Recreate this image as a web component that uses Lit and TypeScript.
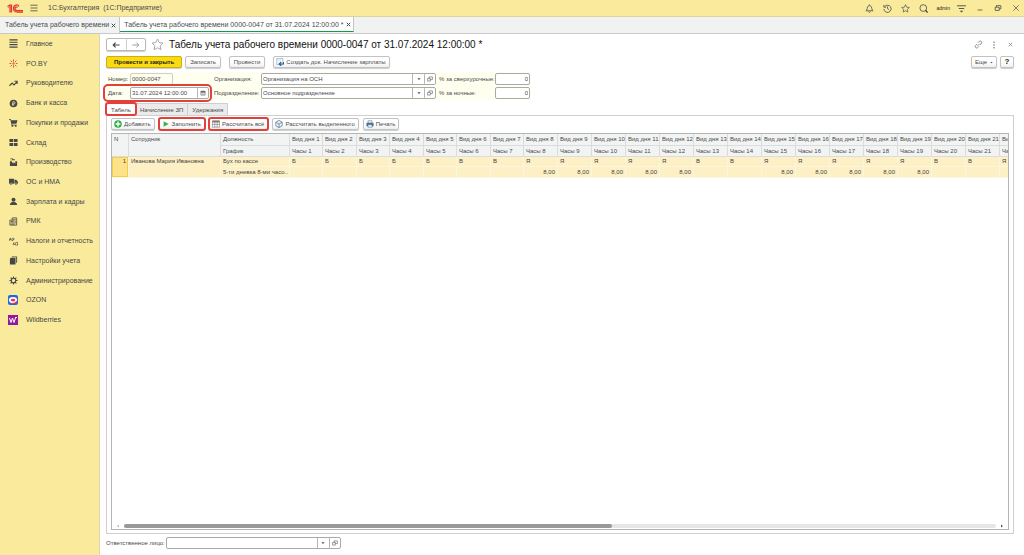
import { LitElement, html, css, svg, nothing } from "lit";
import { customElement, state } from "lit/decorators.js";
import { classMap } from "lit/directives/class-map.js";
import { styleMap } from "lit/directives/style-map.js";

const stroke = (body: unknown, w = 1.5) => html`<svg class="ico" viewBox="0 0 20 20" fill="none" stroke="currentColor" stroke-width=${w} aria-hidden="true">${body}</svg>`;
const solid = (body: unknown) => html`<svg class="ico" viewBox="0 0 20 20" fill="currentColor" aria-hidden="true">${body}</svg>`;

const icons = {
  bell: stroke(svg`<path d="M10 1v2M2 15h16c-2.500-2-2.500-3-3-6C14.500 5.500 12.500 3.500 10 3.500S5.500 5.500 5 9c-.5 3-.5 4-3 6zM8 17c.5 2 3.500 2 4 0"/>`, 1.8),
  history: stroke(svg`<path d="M3.500 6A8 8 0 1 1 2 11M2 2v5h5M10 5.500V10l3.500 2.500"/>`, 1.8),
  star: stroke(svg`<path d="M10 1.500l2.600 5.600 6 .7-4.500 4.100 1.200 6L10 15l-5.300 2.900 1.200-6L1.400 7.800l6-.7z"/>`),
  search: stroke(svg`<circle cx="9.500" cy="9" r="7.500"/><path d="M14.500 14l4.500 5" stroke-width="3"/>`, 1.8),
  settings: stroke(svg`<path d="M0 4h20M4 10h12"/><path d="M6 15h8l-4 4z" fill="currentColor" stroke="none"/>`, 2),
  min: stroke(svg`<path d="M4 15h12"/>`, 2),
  restore: stroke(svg`<path d="M3 8h10v8H3zM6 8V4h11v8h-4"/>`, 2),
  close: stroke(svg`<path d="M3 3l14 14M17 3L3 17"/>`, 1.7),
  shut: stroke(svg`<path d="M3 3l14 14M17 3L3 17"/>`, 4),
  burger: stroke(svg`<path d="M1 3h18M1 10h18M1 17h18"/>`, 2),
  link: stroke(svg`<path d="M8 13l5-5M9 6l3-3.200c3-2.300 7 1.700 4.700 4.700L13.500 11M11 14l-3 3.200c-3 2.300-7-1.700-4.700-4.700L6.500 9"/>`, 1.8),
  dots: solid(svg`<circle cx="10" cy="3" r="2"/><circle cx="10" cy="10" r="2"/><circle cx="10" cy="17" r="2"/>`),
  back: stroke(svg`<path d="M19 10H3M9 4l-6 6 6 6"/>`, 3),
  forward: stroke(svg`<path d="M1 10h16M11 4l6 6-6 6"/>`, 2),
  down: solid(svg`<path d="M2 6h16l-8 9z"/>`),
  open: stroke(svg`<path d="M2 8h9v9H2zM7 8V3h11v9h-7"/>`, 1.8),
  calendar: stroke(svg`<path d="M3 4h14v13H3z"/><path d="M3 6h14" stroke-width="4"/><path d="M6 11h8M6 14h8" stroke-width="1"/>`, 1.8),
  create: html`<svg class="ico" viewBox="0 0 20 20" fill="none" aria-hidden="true"><path d="M2 1h15v15H2z" fill="#fff" stroke="#7b93ab" stroke-width="1.500"/><path d="M4 4h9M4 7h9" stroke="#b8c8d8"/><path d="M19 10v5H9M13 10l-5 5 5 5" stroke="#1d65ad" stroke-width="3"/></svg>`,
  add: html`<svg class="ico" viewBox="0 0 20 20" aria-hidden="true"><circle cx="10" cy="10" r="9.500" fill="#2fae49"/><path d="M10 4v12M4 10h12" stroke="#fff" stroke-width="3.500"/></svg>`,
  play: html`<svg class="ico" viewBox="0 0 20 20" aria-hidden="true"><path d="M4 3l13 7-13 7z" fill="#33b54a"/></svg>`,
  grid: html`<svg class="ico" viewBox="0 0 20 20" aria-hidden="true"><path d="M1 2h18v16H1z" fill="#fff" stroke="#777" stroke-width="1.500"/><path d="M1 4h18" stroke="#777" stroke-width="4"/><path d="M7 2v16M13 2v16M1 11h18" stroke="#777" stroke-width="1.500"/></svg>`,
  cube: html`<svg class="ico" viewBox="0 0 20 20" fill="#eef4f9" stroke="#4f6f8e" stroke-width="1.800" aria-hidden="true"><path d="M10 1l8 4.500v9L10 19l-8-4.500v-9z"/><path d="M2 5.500l8 4.500 8-4.500M10 10v9"/></svg>`,
  print: html`<svg class="ico" viewBox="0 0 20 20" aria-hidden="true"><path d="M5 2h10v6H5z" fill="#fff" stroke="#56779a" stroke-width="1.500"/><rect x="1" y="7" width="18" height="9" rx="2" fill="#4f7397"/><path d="M5 12h10v6H5z" fill="#fff" stroke="#56779a" stroke-width="1.500"/></svg>`,
};

const sections = [
  { name: "Главное", icon: stroke(svg`<path d="M1 2h18M1 7.300h18M1 12.600h18M1 18h18"/>`, 2.500) },
  { name: "PO.BY", icon: html`<svg class="ico" viewBox="0 0 20 20" stroke="#e0452f" stroke-width="2" fill="none" aria-hidden="true"><path d="M10 1v5M10 14v5M1 10h4M15 10h4M3.500 3.500l3.500 3.500M13 13l3.500 3.500M16.500 3.500L13 7M7 13l-3.500 3.500"/><circle cx="10" cy="10" r="1.500"/></svg>` },
  { name: "Руководителю", icon: stroke(svg`<path d="M1 15l6-6 4 4 7-7M12 5h6v6"/>`, 2.500) },
  { name: "Банк и касса", icon: solid(svg`<circle cx="10" cy="10" r="8.500"/><path d="M8.500 15V6h2.500a2.300 2.300 0 0 1 0 4.800H6.500M6.500 13h5" fill="none" stroke="#f9eb9b" stroke-width="1.600"/>`) },
  { name: "Покупки и продажи", icon: solid(svg`<path d="M0 2h4l1 3h14l-2.500 8H6.500L8 15h9v1.500H6L3 4H0z"/><circle cx="7.500" cy="17.500" r="2"/><circle cx="15" cy="17.500" r="2"/>`) },
  { name: "Склад", icon: solid(svg`<path d="M1 2h8.200v7H1zM10.800 2H19v7h-8.200zM1 11h8.200v7H1zM10.800 11H19v7h-8.200z"/>`) },
  { name: "Производство", icon: solid(svg`<path d="M2 18V9l1-1V6h3v3l4 3V9l4 3V7h4v11zM3 1h6v2h4v2H7V3H3z"/>`) },
  { name: "ОС и НМА", icon: solid(svg`<path d="M0 4h11v11H0zM12 6h4l4 5v4h-8z"/><circle cx="4.500" cy="15.500" r="2.500" stroke="#f9eb9b"/><circle cx="15.500" cy="15.500" r="2.500" stroke="#f9eb9b"/>`) },
  { name: "Зарплата и кадры", icon: solid(svg`<circle cx="10" cy="6" r="4.500"/><path d="M2 18c0-5 2.500-6 6-7h4c3.500 1 6 2 6 7z"/>`) },
  { name: "РМК", icon: stroke(svg`<path d="M2 7h9v11H2zM7 7V2h10v16h-6M10 5h5M4 10h5M4 13h5M4 16h5M13 9h3M13 13h3"/>`, 1.8) },
  { name: "Налоги и отчетность", icon: stroke(svg`<path d="M1 8l2-6 3 6M1 6h4M7 3h4v3H8v3M11 12l-2 6M10 15l4 3M14 12v6M16 12h3v6h-3"/>`, 1.6) },
  { name: "Настройки учета", icon: solid(svg`<path d="M5 3l2-2h11v13l-2 2V3z"/><path d="M2 6l2-2h10.500v15H2z"/>`) },
  { name: "Администрирование", icon: stroke(svg`<circle cx="10" cy="10" r="5"/><path d="M10 1v4M10 15v4M1 10h4M15 10h4M3.600 3.600l2.900 2.900M13.500 13.500l2.900 2.900M16.400 3.600l-2.900 2.900M6.500 13.500l-2.900 2.900"/>`, 2.5) },
  { name: "OZON", icon: html`<svg class="ico big" viewBox="0 0 20 20" aria-hidden="true"><rect width="20" height="20" rx="4" fill="#1769e8"/><ellipse cx="10" cy="10" rx="6.500" ry="4.500" fill="#f0355a" stroke="#fff" stroke-width="3.500"/><path d="M1 14c2 4 12 4 18-4v4c-4 5-14 6-18 0z" fill="#f0355a"/></svg>` },
  { name: "Wildberries", icon: html`<svg class="ico big" viewBox="0 0 20 20" aria-hidden="true"><rect width="20" height="20" fill="#96189b"/><path d="M3 6l3 9 3-9 3 9 3-9M14 5h4" fill="none" stroke="#fff" stroke-width="2"/></svg>` },
];

interface Day { kind: string; hours: string; width: number }

const kinds = ["Б", "Б", "Б", "Б", "Б", "В", "В", "Я", "Я", "Я", "Я", "Я", "В", "В", "Я", "Я", "Я", "Я", "Я", "В", "В", "Я"];
const days: Day[] = kinds.map((kind, i) => ({
  kind,
  hours: kind === "Я" && i < 21 ? "8,00" : "",
  width: i < 8 && i % 2 === 0 ? 33 : 34,
}));
const tableWidth = 178 + days.reduce((sum, d) => sum + d.width, 0);

@customElement("app-root")
export class AppRoot extends LitElement {
  @state() private tab = 0;

  static styles = css`
    :host { display: flex; flex-direction: column; height: 100vh; overflow: hidden; background: #fff; color: #4a4a4a; font: 7px/10px "Liberation Sans", Arial, sans-serif; }
    *, *::before { box-sizing: border-box; }
    button, input, select { font: inherit; color: inherit; margin: 0; border-radius: 1px; }
    button { padding: 0; display: inline-flex; align-items: center; justify-content: center; background: none; border: 0; white-space: nowrap; }
    .ico { width: 9px; height: 9px; flex: none; display: block; }
    .grow { flex: 1; }

    .top { display: flex; align-items: center; height: 17px; flex: none; background: #faeb9c; padding: 0 4px 0 7px; border-bottom: 1px solid #ddd3a0; }
    .logo { width: 16px; height: 9px; margin-right: 7px; }
    .burger .ico { width: 8px; height: 8px; }
    .app-name { margin-left: 10px; white-space: pre; }
    .top .tools { display: flex; align-items: center; gap: 9px; margin-right: 10px; }
    .top .window { display: flex; gap: 10px; }
    .top .window .ico { width: 8px; height: 8px; }
    .user { font-size: 5px; color: #222; margin: 0 -2px 0 -1px; }

    .windows { display: flex; height: 17px; flex: none; background: #f1f2f2; border-bottom: 1px solid #c9c9c9; }
    .win { display: flex; align-items: center; gap: 2px; padding: 0 3px 0 5px; border-right: 1px solid #c4c4c4; white-space: nowrap; }
    .win.on { background: #fff; padding: 1px 2px 0 4px; margin-bottom: 1px; border-bottom: 1px solid #12994f; }
    .win a { color: inherit; text-decoration: none; }
    .win .ico { width: 5px; height: 5px; }

    .body { display: flex; flex: 1; min-height: 0; }
    .side { width: 100px; flex: none; background: #faeb9c; border-right: 1px solid #ddd6ae; }
    .side ul { margin: 0; padding: 0; list-style: none; display: grid; grid-template-rows: repeat(15, 1fr); height: 296px; }
    .side a { display: grid; grid-template-columns: 10px auto; justify-content: start; justify-items: center; align-items: center; height: 100%; gap: 8px; padding-left: 8px; color: #474747; text-decoration: none; white-space: nowrap; }
    .side .big { width: 10px; height: 10px; }

    main { flex: 1; min-width: 0; display: flex; flex-direction: column; padding: 4px 10px 6px 6px; font-size: 6px; }
    .head { display: flex; align-items: center; height: 13px; }
    .nav { display: flex; width: 40px; height: 13px; border: 1px solid #b9b9b9; border-radius: 2px; box-shadow: 0 1px 1px #ccc; }
    .nav button { flex: 1; }
    .nav button + button { border-left: 1px solid #ccc; color: #888; }
    .nav .ico { width: 8px; height: 8px; }
    .fav { color: #a8a8a8; margin: 0 5px; }
    .fav .ico { width: 13px; height: 13px; }
    h1 { margin: 0; font-size: 10px; line-height: 13px; font-weight: 400; color: #111; white-space: nowrap; }
    .head .end { display: flex; align-items: center; gap: 8px; color: #777; }
    .head .end .ico { width: 8px; height: 8px; }
    .head .end button { width: 8px; }
    .head .end button:first-child .ico { width: 9px; height: 9px; }
    .head .end button:last-child .ico { width: 5px; height: 5px; stroke-width: 3; }

    .bar { display: flex; align-items: center; }
    .cmds { margin-top: 5px; height: 12px; gap: 8px; }
    .pair { display: flex; gap: 3px; }
    .btn { height: 12px; padding: 0 4px; gap: 2px; border: 1px solid #c2c2c2; border-radius: 2px; background: linear-gradient(#fff 50%, #f0f0f0); box-shadow: 0 1px 1px #ccc; }
    .btn.main { background: #fbdb0b; border-color: #c9ae1f; color: #222; font-weight: 700; padding: 0 7px; }
    .btn .ico { width: 8px; height: 8px; }
    .btn.icon-first { padding: 0 3px 0 2px; }
    .btn.more { padding: 0 4px; gap: 3px; width: 26px; }
    .btn.more .ico { width: 3px; height: 3px; }
    .help { width: 14px; font-weight: 700; font-size: 8px; color: #222; }
    .marked { outline: 2px solid #e33f3b; outline-offset: -1px; border-radius: 2px; }

    .form { display: flex; align-self: flex-start; margin-top: 4px; background: #fffff0; padding: 1px 1px 1px 0; }
    .col { display: flex; flex-direction: column; gap: 2px; }
    .row { display: flex; align-items: center; height: 12px; }
    .row label { padding-left: 2px; white-space: nowrap; }
    .c1 { width: 103px; margin-right: 3px; } .c1 label { width: 24px; }
    .c1 .marked { outline-offset: 1px; }
    .c2 label { width: 49px; }
    .c2 { margin-right: 2px; }
    .c3 .row label { width: 57px; padding-left: 1px; }
    .field { display: flex; height: 12px; border: 1px solid #a9a9a9; border-radius: 2px; background: #fff; overflow: hidden; }
    .field input, .field select { border: 0; padding: 0 1px; background: none; appearance: none; outline: 0; min-width: 0; height: 10px; flex: 1; line-height: 10px; }
    .field button { width: 11px; border-left: 1px solid #b5b5b5; }
    .field button .ico { width: 6px; height: 6px; }
    .pick { display: grid; grid-template-columns: 1fr 12px; flex: 1; min-width: 0; }
    .pick select { grid-area: 1 / 1 / 2 / 3; }
    .pick .arrow { grid-area: 1 / 2; pointer-events: none; display: flex; align-items: center; justify-content: center; border-left: 1px solid #b5b5b5; }
    .pick .arrow .ico { width: 4px; height: 4px; }
    .number { width: 43px; background: #fffff0; border-color: #d0d0c0; }
    .date { width: 79px; }
    .wide { width: 175px; }
    .pct { width: 35px; } .pct input { text-align: right; }

    .tabs { display: flex; margin-top: 3px; height: 12px; }
    .tabs button { padding: 0 4px; background: #ebebeb; border: 1px solid #cfcfcf; border-left: 0; border-bottom: 0; border-radius: 0; }
    .tabs button.on { background: #fff; border-left: 1px solid #cfcfcf; z-index: 1; }
    .tabs .marked { border-radius: 2px; }
    .panel { flex: 1; min-height: 0; border: 1px solid #cfcfcf; padding: 2px 4px 3px; display: flex; flex-direction: column; }
    .tools2 { height: 12px; gap: 4px; }
    .sheet { flex: 1; min-height: 0; margin-top: 3px; border: 1px solid #b4b4b4; overflow: hidden; display: flex; flex-direction: column; }
    .clip { flex: 1; overflow: hidden; }
    table { table-layout: fixed; border-collapse: separate; border-spacing: 0; }
    th, td { padding: 0 2px; font-weight: 400; text-align: left; vertical-align: top; overflow: hidden; white-space: nowrap; line-height: 10px; border-right: 1px solid #dcdcdc; border-bottom: 1px solid #dcdcdc; }
    th { background: #f2f3f3; height: 12px; line-height: 11px; padding-right: 0; }
    thead tr + tr th { height: 11px; line-height: 10px; }
    td { background: #fef0c5; border-color: #fbf6e2; height: 11px; color: #444; }
    tbody tr:first-child td { height: 10px; line-height: 9px; }
    td.num { text-align: right; }
    td.cur { background: #fde28a; box-shadow: inset 0 0 0 1px #f2cf4a; }
    td.name { padding-right: 0; }
    .scroll { display: flex; align-items: center; height: 6px; gap: 4px; padding: 0 4px; }
    .scroll .ico { width: 4px; height: 4px; color: #555; }
    .track { flex: 1; height: 4px; border-radius: 2px; background: #e6e6e6; }
    .thumb { width: 56%; height: 4px; border-radius: 2px; background: #999; }
    .foot { display: flex; align-items: center; gap: 1px; margin-top: 3px; height: 12px; }
  `;

  private picker(id: string, value: string) {
    return html`<div class="field wide">
      <div class="pick"><select id=${id}><option>${value}</option></select><span class="arrow">${icons.down}</span></div>
      <button aria-label="Открыть">${icons.open}</button>
    </div>`;
  }

  render() {
    return html`
      <header class="top">
        <svg class="logo" viewBox="0 0 32 18" fill="none" stroke="#e23a32" stroke-width="2.500" aria-hidden="true"><path d="M1 5l5-3v15M9 1v16M3 7v1M24 5c-2-5-11-4-11 4 0 5 4 7 8 7h11M21 7c-2-2-5-1-5 2 0 3 2 4 5 4h11"/></svg>
        <button class="burger" aria-label="Меню">${icons.burger}</button>
        <span class="app-name">1С:Бухгалтерия  (1С:Предприятие)</span>
        <span class="grow"></span>
        <div class="tools">
          <button aria-label="Уведомления">${icons.bell}</button>
          <button aria-label="История">${icons.history}</button>
          <button aria-label="Избранное">${icons.star}</button>
          <button aria-label="Поиск">${icons.search}</button>
          <span class="user">admin</span>
          <button aria-label="Настройки">${icons.settings}</button>
        </div>
        <div class="window">
          <button aria-label="Свернуть">${icons.min}</button>
          <button aria-label="Восстановить">${icons.restore}</button>
          <button aria-label="Закрыть">${icons.close}</button>
        </div>
      </header>
      <nav class="windows">
        <div class="win"><a href="#list">Табель учета рабочего времени</a><button aria-label="Закрыть">${icons.shut}</button></div>
        <div class="win on"><a href="#doc">Табель учета рабочего времени 0000-0047 от 31.07.2024 12:00:00 *</a><button aria-label="Закрыть">${icons.shut}</button></div>
      </nav>
      <div class="body">
        <nav class="side"><ul>${sections.map((s) => html`<li><a href="#section">${s.icon}<span>${s.name}</span></a></li>`)}</ul></nav>
        <main>
          <div class="head">
            <div class="nav"><button aria-label="Назад">${icons.back}</button><button aria-label="Вперед">${icons.forward}</button></div>
            <button class="fav" aria-label="В избранное">${icons.star}</button>
            <h1>Табель учета рабочего времени 0000-0047 от 31.07.2024 12:00:00 *</h1>
            <span class="grow"></span>
            <div class="end">
              <button aria-label="Ссылка">${icons.link}</button>
              <button aria-label="Меню">${icons.dots}</button>
              <button aria-label="Закрыть">${icons.close}</button>
            </div>
          </div>
          <div class="bar cmds">
            <div class="pair"><button class="btn main">Провести и закрыть</button><button class="btn">Записать</button></div>
            <button class="btn">Провести</button>
            <button class="btn icon-first">${icons.create}Создать док. Начисление зарплаты</button>
            <span class="grow"></span>
            <div class="pair"><button class="btn more">Еще ${icons.down}</button><button class="btn help">?</button></div>
          </div>
          <div class="form">
            <div class="col c1">
              <div class="row"><label for="num">Номер:</label><div class="field number"><input id="num" value="0000-0047" /></div></div>
              <div class="row marked"><label for="date">Дата:</label><div class="field date"><input id="date" value="31.07.2024 12:00:00" /><button aria-label="Календарь">${icons.calendar}</button></div></div>
            </div>
            <div class="col c2">
              <div class="row"><label for="org">Организация:</label>${this.picker("org", "Организация на ОСН")}</div>
              <div class="row"><label for="dep">Подразделение:</label>${this.picker("dep", "Основное подразделение")}</div>
            </div>
            <div class="col c3">
              <div class="row"><label for="over">% за сверхурочные:</label><div class="field pct"><input id="over" value="0" /></div></div>
              <div class="row"><label for="night">% за ночные:</label><div class="field pct"><input id="night" value="0" /></div></div>
            </div>
          </div>
          <div class="tabs" role="tablist">
            ${["Табель", "Начисление ЗП", "Удержания"].map((t, i) => html`<button role="tab" aria-selected=${this.tab === i} class=${classMap({ on: this.tab === i, marked: i === 0 })} @click=${() => (this.tab = i)}>${t}</button>`)}
          </div>
          <section class="panel">
            <div class="bar tools2">
              <button class="btn icon-first">${icons.add}Добавить</button>
              <button class="btn icon-first marked">${icons.play}Заполнить</button>
              <button class="btn icon-first marked">${icons.grid}Рассчитать всё</button>
              <button class="btn icon-first">${icons.cube}Рассчитать выделенного</button>
              <button class="btn icon-first">${icons.print}Печать</button>
            </div>
            <div class="sheet">
              <div class="clip">
                <table style=${styleMap({ width: `${tableWidth}px` })}>
                  <colgroup>
                    ${[17, 92, 69, ...days.map((d) => d.width)].map((w) => html`<col style=${styleMap({ width: `${w}px` })} />`)}
                  </colgroup>
                  <thead>
                    <tr><th rowspan="2">N</th><th rowspan="2">Сотрудник</th><th>Должность</th>${days.map((_, i) => html`<th>Вид дня ${i + 1}</th>`)}</tr>
                    <tr><th>График</th>${days.map((_, i) => html`<th>Часы ${i + 1}</th>`)}</tr>
                  </thead>
                  <tbody>
                    <tr><td class="num cur" rowspan="2">1</td><td rowspan="2">Иванова Мария Ивановна</td><td>Бух по кассе</td>${days.map((d) => html`<td>${d.kind}</td>`)}</tr>
                    <tr><td class="name">5-ти дневка 8-ми часо..</td>${days.map((d) => html`<td class="num">${d.hours || nothing}</td>`)}</tr>
                  </tbody>
                </table>
              </div>
              <div class="scroll">
                <svg class="ico" viewBox="0 0 20 20" fill="#bbb" aria-hidden="true"><path d="M15 2v16L5 10z"/></svg>
                <div class="track"><div class="thumb"></div></div>
                <svg class="ico" viewBox="0 0 20 20" fill="currentColor" aria-hidden="true"><path d="M5 2v16l10-8z"/></svg>
              </div>
            </div>
          </section>
          <div class="foot"><label for="resp">Ответственное лицо:</label>${this.picker("resp", "")}</div>
        </main>
      </div>
    `;
  }
}
